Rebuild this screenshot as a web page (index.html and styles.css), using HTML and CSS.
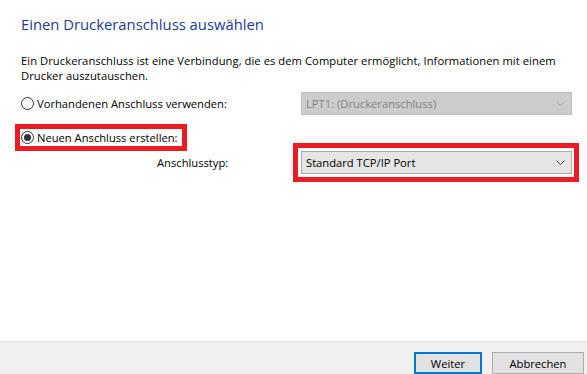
FILE: index.html
```html
<!DOCTYPE html>
<html lang="de">
<head>
<meta charset="utf-8">
<title>Druckeranschluss</title>
<link rel="stylesheet" href="styles.css">
</head>
<body>
<div class="dialog">
  <main class="content">
    <h1 class="title">Einen Druckeranschluss auswählen</h1>
    <p class="desc">Ein Druckeranschluss ist eine Verbindung, die es dem Computer ermöglicht, Informationen mit einem Drucker auszutauschen.</p>

    <div class="row row-existing">
      <label class="radio"><span class="circle"></span><span class="radio-text">Vorhandenen Anschluss verwenden:</span></label>
      <div class="combo combo-disabled">
        <span class="combo-text">LPT1: (Druckeranschluss)</span>
        <svg class="chevron" width="9" height="5" viewBox="0 0 9 5"><path d="M0.5 0.5 L4.5 4.5 L8.5 0.5" fill="none" stroke="currentColor" stroke-width="1"/></svg>
      </div>
    </div>

    <div class="row row-new">
      <label class="radio checked"><span class="circle"><span class="dot"></span></span><span class="radio-text">Neuen Anschluss erstellen:</span></label>
    </div>

    <div class="row row-type">
      <span class="field-label">Anschlusstyp:</span>
      <div class="combo">
        <span class="combo-text">Standard TCP/IP Port</span>
        <svg class="chevron" width="9" height="5" viewBox="0 0 9 5"><path d="M0.5 0.5 L4.5 4.5 L8.5 0.5" fill="none" stroke="currentColor" stroke-width="1"/></svg>
      </div>
    </div>

    <div class="highlight hl-radio"></div>
    <div class="highlight hl-combo"></div>
  </main>
  <footer class="footer">
    <button class="btn btn-default">Weiter</button>
    <button class="btn btn-cancel">Abbrechen</button>
  </footer>
</div>
</body>
</html>
```

FILE: styles.css
```css
html, body {
  margin: 0;
  padding: 0;
  background: #ffffff;
}

body {
  font-family: "Open Sans", "Noto Sans", sans-serif;
  font-size: 11.2px;
  line-height: 15px;
  color: #000000;
}

.dialog {
  width: 587px;
  height: 374px;
  display: flex;
  flex-direction: column;
  overflow: hidden;
}

.content {
  position: relative;
  height: 341px;
  padding: 14px 0 0 21px;
  box-sizing: border-box;
  background: #ffffff;
}

.title {
  margin: 0;
  font-size: 14.8px;
  line-height: 20px;
  font-weight: normal;
  color: #1a3a95;
}

.desc {
  margin: 19px 0 0 0;
  width: 550px;
  letter-spacing: 0.06px;
}

.row {
  display: flex;
  align-items: center;
}

.row-existing {
  margin-top: 9px;
  height: 23px;
}

.row-existing .radio {
  width: 280px;
}

.row-new {
  margin-top: 11px;
  height: 22px;
}

.row-type {
  margin-top: 3px;
  height: 23px;
}

.radio {
  display: flex;
  align-items: center;
}

.circle {
  width: 13px;
  height: 13px;
  box-sizing: border-box;
  border: 1px solid #333333;
  border-radius: 50%;
  display: flex;
  align-items: center;
  justify-content: center;
  margin-right: 3px;
}

.dot {
  width: 7px;
  height: 7px;
  border-radius: 50%;
  background: #333333;
}

.field-label {
  width: 144px;
  padding-left: 136px;
}

.combo {
  width: 271px;
  height: 23px;
  box-sizing: border-box;
  border: 1px solid #adadad;
  background: #e5e5e5;
  display: flex;
  align-items: center;
  justify-content: space-between;
  padding: 0 6px 0 4px;
  color: #000000;
}

.combo .chevron {
  color: #444444;
}

.combo-disabled {
  background: #cccccc;
  border-color: #bfbfbf;
  color: #838383;
}

.combo-disabled .chevron {
  color: #a8a8a8;
}

.highlight {
  position: absolute;
  border: 5px solid #ed1c24;
  box-sizing: border-box;
}

.hl-radio {
  left: 15px;
  top: 124px;
  width: 172px;
  height: 27px;
}

.hl-combo {
  left: 293px;
  top: 143px;
  width: 286px;
  height: 39px;
}

.footer {
  flex: 1;
  border-top: 1px solid #dfdfdf;
  background: #f0f0f0;
  display: flex;
  justify-content: flex-end;
  align-items: flex-start;
  gap: 10px;
  padding: 10px 3px 0 0;
}

.btn {
  font-family: inherit;
  font-size: 11.2px;
  line-height: 15px;
  height: 22px;
  margin: 0;
  padding: 0;
  background: #e1e1e1;
  border: 1px solid #adadad;
  color: #000000;
  box-sizing: border-box;
}

.btn-default {
  width: 68px;
  border: 2px solid #0078d7;
}

.btn-cancel {
  width: 92px;
}
```
